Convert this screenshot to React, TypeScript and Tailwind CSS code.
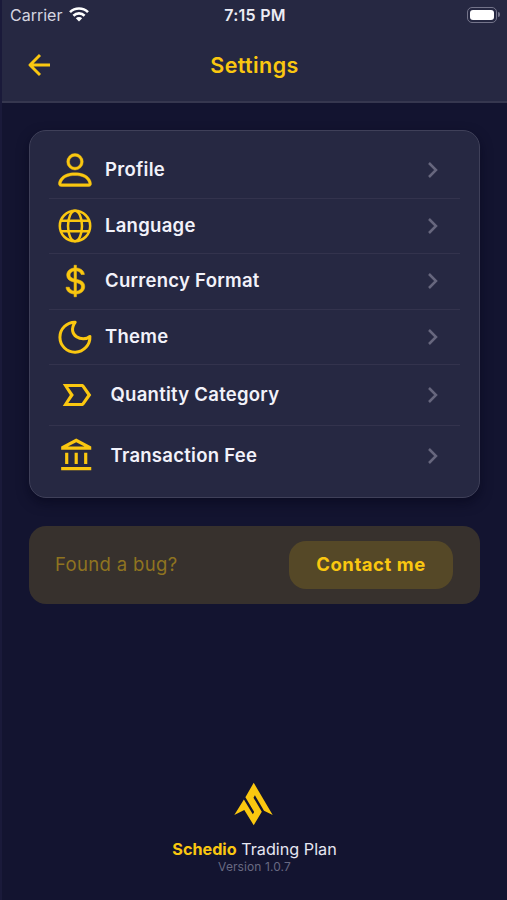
import type { ReactNode } from 'react';
import { BsCurrencyDollar, BsPerson } from 'react-icons/bs';
import { MdLabelImportantOutline, MdOutlineAccountBalance } from 'react-icons/md';

interface RowProps {
  icon: ReactNode;
  label: string;
  className?: string;
  labelClassName?: string;
}

function GlobeIcon() {
  return (
    <svg width="34" height="34" viewBox="0 0 34 34" fill="none" stroke="currentColor" strokeWidth="2.5">
      <circle cx="17" cy="17" r="15.2" />
      <ellipse cx="17" cy="17" rx="7" ry="15.2" />
      <path d="M3 11.7h28M3 22.3h28" />
    </svg>
  );
}

function MoonIcon() {
  return (
    <svg width="34" height="34" viewBox="0 0 34 34" fill="none" stroke="currentColor" strokeWidth="3" strokeLinejoin="round">
      <path d="M17.2 2.2A15 15 0 1 0 31.9 16.4C25 23 8 15.5 17.2 2.2Z" />
    </svg>
  );
}

function Chevron() {
  return (
    <svg width="12" height="18" viewBox="0 0 12 18" fill="none" stroke="currentColor" strokeWidth="2.5" className="text-[#67677e]">
      <path d="M2 2l7 7-7 7" />
    </svg>
  );
}

function Logo() {
  return (
    <svg width="40" height="44" viewBox="0 0 40 44" fill="currentColor" className="mr-[2px]">
      <path d="M19.7 0.7L38.7 33L30 28.7L20.9 13.2L19.5 15.7L27.8 29.8L19.7 43.3L10.3 28L0.3 33L9.9 17.6L18.8 32.2L20.2 29.9L11.4 15.2Z" />
    </svg>
  );
}

function Row({ icon, label, className = 'h-[55.5px]', labelClassName = 'ml-[7px]' }: RowProps) {
  return (
    <button className={`flex w-full items-center border-b border-[#33334d] pr-[21px] pl-[3px] last:border-b-0 ${className}`}>
      <span className="flex w-[46px] shrink-0 items-center justify-center text-[#fac710]">{icon}</span>
      <span className={`flex-1 text-left text-[18.5px] font-semibold tracking-[0.27px] text-[#f2f2fa] ${labelClassName}`}>{label}</span>
      <Chevron />
    </button>
  );
}

function StatusBar() {
  return (
    <div className="grid h-[29px] grid-cols-3 items-center pr-[7px] pl-[8px]">
      <div className="flex items-center gap-[7px] text-[16px] text-[#d5d5e0]">
        Carrier
        <svg width="20" height="15" viewBox="0 0 20 15" fill="none" stroke="#fff" strokeWidth="2.6">
          <path d="M1 5.2a12.8 12.8 0 0 1 18 0M4.4 8.7a8 8 0 0 1 11.2 0" />
          <path d="M10 14.5L6.8 11.3a4.5 4.5 0 0 1 6.4 0Z" fill="#fff" stroke="none" />
        </svg>
      </div>
      <div className="text-center text-[16px] font-semibold tracking-[0.25px] whitespace-nowrap text-[#ececf4]">7:15 PM</div>
      <div className="flex items-center justify-end gap-px">
        <div className="h-[16px] w-[30px] rounded-[5px] border border-[#74748a] p-[2px]">
          <div className="h-full rounded-[3px] bg-white" />
        </div>
        <div className="h-[5px] w-[2px] rounded-r-full bg-[#74748a]" />
      </div>
    </div>
  );
}

export default function App() {
  return (
    <div className="flex h-[900px] w-[507px] flex-col overflow-hidden border-l-2 border-[#1a1a3a] bg-[#131430] font-['Inter',sans-serif]">
      <header className="h-[103px] shrink-0 border-b-2 border-[#36374f] bg-[#262842]">
        <StatusBar />
        <div className="grid h-[72px] grid-cols-[60px_1fr_60px] items-center">
          <button className="pl-[26px] text-[#fac710]">
            <svg width="24" height="24" viewBox="0 0 24 24" fill="none" stroke="currentColor" strokeWidth="2.9" strokeLinejoin="round">
              <path d="M12 2L2 12l10 10M2 12h20" />
            </svg>
          </button>
          <h1 className="text-center text-[21.5px] font-semibold tracking-[0.4px] text-[#fac710]">Settings</h1>
        </div>
      </header>

      <main className="flex flex-col pt-[27px] pr-[27px] pl-[27px]">
        <section className="h-[368px] rounded-[17px] border border-[#3f4059] bg-[#262842] px-[19px] pt-[12px] shadow-[0_5px_12px_rgba(5,5,25,0.55)]">
          <Row icon={<BsPerson size={44} stroke="currentColor" strokeWidth="0.15" />} label="Profile" />
          <Row icon={<GlobeIcon />} label="Language" />
          <Row icon={<BsCurrencyDollar size={36} stroke="currentColor" strokeWidth="0.25" />} label="Currency Format" />
          <Row icon={<MoonIcon />} label="Theme" />
          <Row
            icon={<MdLabelImportantOutline size={38} className="ml-1" />}
            label="Quantity Category"
            className="h-[60.5px]"
            labelClassName="ml-[12.5px]"
          />
          <Row
            icon={<MdOutlineAccountBalance size={38} className="ml-1" />}
            label="Transaction Fee"
            className="h-[60px]"
            labelClassName="ml-[12.5px]"
          />
        </section>

        {/* Bug report */}
        <section className="mt-[27.5px] flex h-[78px] items-center justify-between rounded-[17px] bg-[#37312d] pr-[27px] pl-[26px]">
          <span className="text-[18.5px] tracking-[0.35px] text-[#8f7420]">Found a bug?</span>
          <button className="h-[48px] w-[164px] rounded-[17px] bg-[#554827] text-[18.5px] font-bold tracking-[0.55px] text-[#fac710]">
            Contact me
          </button>
        </section>
      </main>

      <footer className="mt-auto flex flex-col items-center pb-[25px] text-[#fac710]">
        <Logo />
        <div className="mt-[13px] text-[16.2px] leading-[20px] text-[#e6e6f2]">
          <span className="font-bold text-[#fac710]">Schedio</span> Trading Plan
        </div>
        <div className="text-[12px] leading-[16px] tracking-[0.1px] text-[#686982]">Version 1.0.7</div>
      </footer>
    </div>
  );
}
